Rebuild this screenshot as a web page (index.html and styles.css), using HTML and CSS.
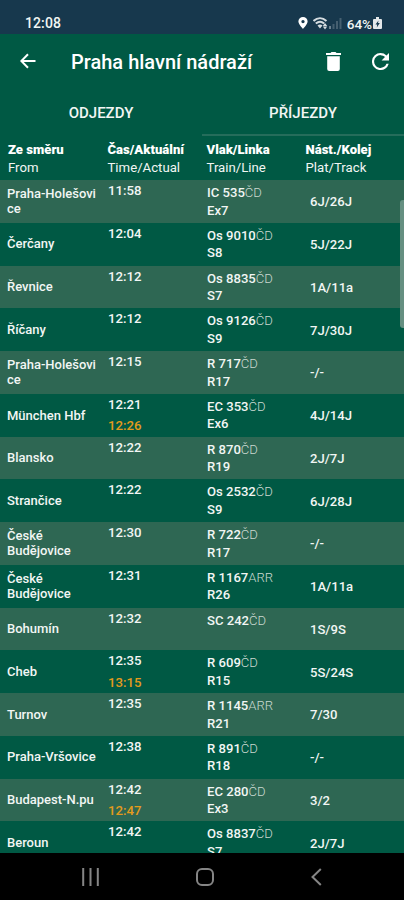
FILE: index.html
```
<!DOCTYPE html>
<html lang="cs">
<head>
    <meta charset="UTF-8">
    <meta name="viewport" content="width=device-width, initial-scale=1.0">
    <title>Praha hlavní nádraží</title>
    <link rel="stylesheet" href="styles.css">
</head>
<body>
    <div class="status-bar">
        <span class="clock">12:08</span>
        <div class="status-icons">
            <svg class="pin" width="10" height="12" viewBox="0 0 10 13"><path fill="#fff" fill-rule="evenodd" d="M5 0a5 5 0 0 1 5 5c0 3-5 8-5 8S0 8 0 5a5 5 0 0 1 5-5zm0 3.2a1.8 1.8 0 1 0 0 3.600 1.800 1.800 0 0 0 0-3.600z"/></svg>
            <svg class="wifi" width="16" height="13" viewBox="0 0 16 13">
                <g fill="none" stroke="#d5dce0" stroke-width="2"><path d="M.5 4C4.500.4 9.500.4 13.500 4"/><path d="M2.800 6.500C5.500 4.200 8.500 4.200 11.200 6.500"/></g>
                <path fill="#d5dce0" d="M4.500 8.500Q7 6.500 9.500 8.500L7 11.500zM12 6l2.200 3H9.800zM12 12.500l-2.200-3h4.400z"/>
            </svg>
            <svg class="signal" width="13" height="12" viewBox="0 0 13 12"><path fill="#6d8290" d="M0 9h2v3H0z"/><path fill="#455f70" d="M3.500 7h2v5h-2zM7 4h2v8H7zM10.500 1h2v11h-2z"/></svg>
            <span class="battery-text">64%</span>
            <svg width="9" height="12" viewBox="0 0 9 12"><path fill="#e4e8ea" d="M3 0h3v2h2a1 1 0 0 1 1 1v8a1 1 0 0 1-1 1H1a1 1 0 0 1-1-1V3a1 1 0 0 1 1-1h2z"/><path fill="#17384d" d="M5.500 3.500L2.500 7.500h1.700L3.800 10.500 6.800 6H5z"/></svg>
        </div>
    </div>

    <header class="app-bar">
        <svg class="back" width="16" height="16" viewBox="0 0 16 16"><path d="M15.500 8H1.500M8 1.200L1.300 8 8 14.800" fill="none" stroke="#fff" stroke-width="2"/></svg>
        <h1>Praha hlavní nádraží</h1>
        <svg class="trash" width="15" height="19" viewBox="0 0 15 19"><path fill="#fff" d="M0 1h4.500l1-1h4l1 1H15v2H0zM1.200 4.200h12.600V17a2 2 0 0 1-2 2H3.200a2 2 0 0 1-2-2z"/></svg>
        <svg class="refresh" width="17" height="17" viewBox="4 4 16 16"><path fill="#fff" d="M17.650 6.350A7.960 7.960 0 0 0 12 4a8 8 0 1 0 7.730 10h-2.080A6 6 0 1 1 12 6c1.660 0 3.140.69 4.220 1.780L13 11h7V4z"/></svg>
    </header>

    <nav class="tabs">
        <div class="tab">ODJEZDY</div>
        <div class="tab active">PŘÍJEZDY</div>
    </nav>

    <div class="table-head">
        <div><b>Ze směru</b><br>From</div>
        <div><b>Čas/Aktuální</b><br>Time/Actual</div>
        <div><b>Vlak/Linka</b><br>Train/Line</div>
        <div><b>Nást./Kolej</b><br>Plat/Track</div>
    </div>

    <main class="board">
        <div id="rows"></div>
        <div class="scrollbar"></div>
    </main>

    <footer class="nav-bar">
        <svg class="recents" width="17" height="18" viewBox="0 0 17 18"><path d="M1.200 0v18M8.500 0v18M15.800 0v18" stroke="#858585" stroke-width="2"/></svg>
        <svg class="home" width="18" height="18" viewBox="0 0 18 18"><rect x="1" y="1" width="16" height="16" rx="5" fill="none" stroke="#858585" stroke-width="2"/></svg>
        <svg class="nav-back" width="11" height="18" viewBox="0 0 11 18"><path d="M9.800 1L1.500 9l8.300 8" fill="none" stroke="#858585" stroke-width="2"/></svg>
    </footer>

    <script src="script.js"></script>
</body>
</html>
```
FILE: styles.css
```
* {
    box-sizing: border-box;
}

body {
    margin: 0;
    height: 900px;
    display: flex;
    flex-direction: column;
    overflow: hidden;
    background-color: #005944;
    color: #f2f6f4;
    font-family: Roboto, "Liberation Sans", sans-serif;
    font-size: 13px;
}

svg {
    display: block;
    flex: none;
}

/* Phone status bar */
.status-bar {
    flex: none;
    height: 34px;
    padding: 10px 22px 0 25px;
    display: flex;
    justify-content: space-between;
    align-items: center;
    background-color: #17384d;
}

.clock {
    font-size: 14px;
    font-weight: 500;
    letter-spacing: 0.1px;
    padding-top: 2px;
}

.status-icons {
    display: flex;
    align-items: center;
    padding-top: 2px;
}

.wifi {
    margin-left: 5px;
}

.signal {
    margin-left: 0;
}

.battery-text {
    font-size: 13.5px;
    font-weight: 500;
    margin: 1px 1px 0 5px;
}

/* Title and buttons */
.app-bar {
    flex: none;
    height: 56px;
    padding: 0 15px 2px 20px;
    display: flex;
    align-items: center;
}

.app-bar h1 {
    flex: 1;
    margin: 2px 0 0 35px;
    font-size: 20px;
    font-weight: 500;
    color: #fff;
    white-space: nowrap;
}

.refresh {
    margin-left: 31px;
}

.tabs {
    flex: none;
    height: 46px;
    display: flex;
}

.tab {
    flex: 1;
    padding-top: 2px;
    display: flex;
    align-items: center;
    justify-content: center;
    font-size: 15px;
    font-weight: 500;
    border-bottom: 2px solid transparent;
}

.tab.active {
    border-bottom: 2px solid #256d5b;
}

.table-head,
.row {
    display: grid;
    grid-template-columns: 101px 99px 103px 1fr;
}

.table-head {
    flex: none;
    height: 44px;
    grid-template-columns: 99.5px 99px 99px 1fr;
    padding: 5px 0 0 8px;
    font-size: 13.2px;
    line-height: 17.5px;
}

.table-head b {
    font-size: 13.1px;
    font-weight: 900;
    color: #fff;
}

/* Arrivals */
.board {
    position: relative;
    flex: 1;
    min-height: 0;
    overflow: hidden;
}

.row {
    height: 42.75px;
    padding-left: 7px;
    font-weight: 500;
}

.row:nth-child(odd) {
    background-color: #2e6753;
}

.from {
    align-self: center;
    width: 93px;
    line-height: 15.5px;
    word-break: break-all;
}

.from.words {
    word-break: normal;
}

.time {
    font-size: 13.2px;
    line-height: 21.5px;
}

.late {
    color: #e39b1c;
}

.train {
    padding-top: 4px;
    font-size: 13.1px;
    line-height: 17.5px;
    white-space: nowrap;
}

.carrier {
    font-weight: 300;
    color: #c9d8d0;
}

.track {
    align-self: center;
    padding-top: 1px;
    font-size: 13.1px;
}

.scrollbar {
    position: absolute;
    top: 20px;
    right: 0;
    width: 4px;
    height: 128px;
    border-radius: 3px 0 0 3px;
    background-color: #658f81;
}

/* Android buttons */
.nav-bar {
    flex: none;
    height: 47px;
    padding: 0 82px 0 82px;
    display: flex;
    align-items: center;
    justify-content: space-between;
    background-color: #000;
}
```
FILE: script.js
```
// from, time, delayed time, train, carrier, line, track
const arrivals = [
    ['Praha-Holešovice', '11:58', '', 'IC 535', 'ČD', 'Ex7', '6J/26J'],
    ['Čerčany', '12:04', '', 'Os 9010', 'ČD', 'S8', '5J/22J'],
    ['Řevnice', '12:12', '', 'Os 8835', 'ČD', 'S7', '1A/11a'],
    ['Říčany', '12:12', '', 'Os 9126', 'ČD', 'S9', '7J/30J'],
    ['Praha-Holešovice', '12:15', '', 'R 717', 'ČD', 'R17', '-/-'],
    ['München Hbf', '12:21', '12:26', 'EC 353', 'ČD', 'Ex6', '4J/14J'],
    ['Blansko', '12:22', '', 'R 870', 'ČD', 'R19', '2J/7J'],
    ['Strančice', '12:22', '', 'Os 2532', 'ČD', 'S9', '6J/28J'],
    ['České Budějovice', '12:30', '', 'R 722', 'ČD', 'R17', '-/-'],
    ['České Budějovice', '12:31', '', 'R 1167', 'ARR', 'R26', '1A/11a'],
    ['Bohumín', '12:32', '', 'SC 242', 'ČD', '', '1S/9S'],
    ['Cheb', '12:35', '13:15', 'R 609', 'ČD', 'R15', '5S/24S'],
    ['Turnov', '12:35', '', 'R 1145', 'ARR', 'R21', '7/30'],
    ['Praha-Vršovice', '12:38', '', 'R 891', 'ČD', 'R18', '-/-'],
    ['Budapest-N.pu', '12:42', '12:47', 'EC 280', 'ČD', 'Ex3', '3/2'],
    ['Beroun', '12:42', '', 'Os 8837', 'ČD', 'S7', '2J/7J']
];

document.getElementById('rows').innerHTML = arrivals.map(([from, time, late, train, carrier, line, track]) => `
    <div class="row">
        <div class="from ${from.includes(' ') ? 'words' : ''}">${from}</div>
        <div class="time">${time}<div class="late">${late}</div></div>
        <div class="train">${train}<span class="carrier">${carrier}</span><br>${line}</div>
        <div class="track">${track}</div>
    </div>`).join('');
```
